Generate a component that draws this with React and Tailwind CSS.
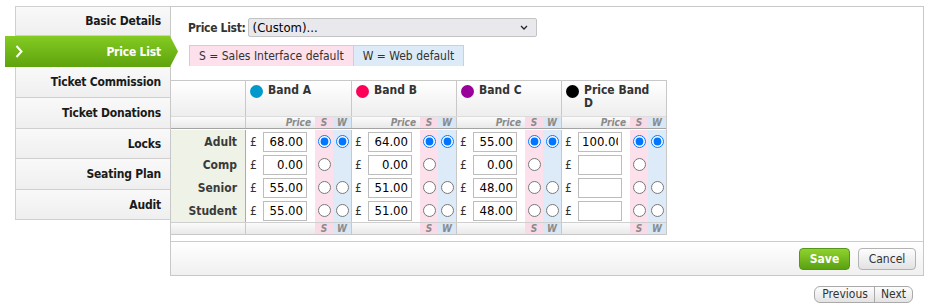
import React from 'react';

const tabs = [
  { label: 'Basic Details', h: 'h-[29px]' },
  { label: 'Price List', h: 'h-[31px]', active: true },
  { label: 'Ticket Commission', h: 'h-[31px]' },
  { label: 'Ticket Donations', h: 'h-[31px]' },
  { label: 'Locks', h: 'h-[30px]' },
  { label: 'Seating Plan', h: 'h-[31px]' },
  { label: 'Audit', h: 'h-[30px]' },
];

const bands = [
  { name: 'Band A', dot: 'bg-[#0099cc]', prices: ['68.00', '0.00', '55.00', '55.00'] },
  { name: 'Band B', dot: 'bg-[#ff0059]', prices: ['64.00', '0.00', '51.00', '51.00'] },
  { name: 'Band C', dot: 'bg-[#990099]', prices: ['55.00', '0.00', '48.00', '48.00'] },
  { name: 'Price Band D', dot: 'bg-black', prices: ['100.00', '', '', ''] },
];

const rows = [
  { label: 'Adult', h: 'h-[24px] pt-[1px]' },
  { label: 'Comp', h: 'h-[23px]' },
  { label: 'Senior', h: 'h-[23px]' },
  { label: 'Student', h: 'h-[23px]' },
];

const rowGrid = 'grid grid-cols-[75px_repeat(4,15px_54px_18px_18px)]';

const Sidebar = () => (
  <div className="w-[155px] border-t border-[#cfcfcf]">
    {tabs.map((t) =>
      t.active ? (
        <div key={t.label} className={`relative z-10 -ml-[10px] w-[165px] ${t.h} flex items-center justify-between pl-[10px] pr-[9px] bg-gradient-to-b from-[#84cb22] to-[#5ea30c] text-white`}>
          <svg width="8" height="13" viewBox="0 0 8 13">
            <polyline points="1.5,1 6.5,6.5 1.5,12" fill="none" stroke="white" strokeWidth="2" />
          </svg>
          <span className="font-bold text-[12px] tracking-[-0.2px]">{t.label}</span>
          <svg className="absolute top-0 right-[-8px]" width="8" height="31" viewBox="0 0 8 31">
            <defs>
              <linearGradient id="tabg" x1="0" y1="0" x2="0" y2="1">
                <stop offset="0" stopColor="#84cb22" />
                <stop offset="1" stopColor="#5ea30c" />
              </linearGradient>
            </defs>
            <polygon points="0,0 8,15.5 0,31" fill="url(#tabg)" />
          </svg>
        </div>
      ) : (
        <div key={t.label} className={`${t.h} flex items-center justify-end pr-[9px] border-l border-b border-[#cfcfcf] bg-gradient-to-b from-[#f9f9f9] to-[#efefef] text-[12px] tracking-[-0.2px] font-bold text-[#1a1a1a]`}>
          {t.label}
        </div>
      )
    )}
  </div>
);

const Radio = ({ name, checked }) => (
  <input type="radio" name={name} defaultChecked={checked} className="m-0 w-[13px] h-[13px]" />
);

const PriceTable = () => (
  <div className="w-[496px] border-t border-r border-b border-[#c8c8c8] text-[#333]">
    <div className="grid grid-cols-[75px_repeat(4,105px)] h-[36px] border-b border-[#dcdcdc] bg-gradient-to-b from-white to-[#eeeeee]">
      <div className="border-r border-[#c8c8c8]" />
      {bands.map((b, i) => (
        <div key={b.name} className={`flex items-start gap-[5px] pl-[4px] pt-[3px] ${i > 0 ? 'border-l border-[#c8c8c8]' : ''}`}>
          <span className={`mt-[1px] w-[13px] h-[13px] rounded-full shrink-0 ${b.dot}`} />
          <span className="max-w-[66px] text-[12px] leading-[13px] font-bold">{b.name}</span>
        </div>
      ))}
    </div>
    <div className={`${rowGrid} h-[12px] border-b border-[#a3a3a3] bg-gradient-to-b from-[#fbfbfb] to-[#e9e9e9] text-[10px] leading-[11px] italic font-bold text-[#8a8a8a]`}>
      <div className="border-r border-[#c8c8c8]" />
      {bands.map((b, i) => (
        <React.Fragment key={b.name}>
          <div className={i > 0 ? 'border-l border-[#c8c8c8]' : ''} />
          <div className="text-right pr-[4px]">Price</div>
          <div className="bg-[#f9dbe7] text-center">S</div>
          <div className="bg-[#d9e7f5] text-center">W</div>
        </React.Fragment>
      ))}
    </div>
    {rows.map((r, ri) => (
      <div key={r.label} className={`${rowGrid} ${r.h}`}>
        <div className="flex items-center justify-end pr-[8px] bg-[#eff2e6] border-r border-[#aab489] text-[12px] font-bold text-[#3a3a3a]">
          {r.label}
        </div>
        {bands.map((b, i) => (
          <React.Fragment key={b.name}>
            <div className={`flex items-center text-[12px] ${i > 0 ? 'border-l border-[#c8c8c8] pl-[3px]' : 'pl-[4px]'}`}>£</div>
            <div className="flex items-center">
              <input
                type="text"
                defaultValue={b.prices[ri]}
                className="ml-[2px] w-[44px] h-[20px] border border-[#bdbdbd] bg-white text-right px-[3px] text-[13px] text-black outline-none"
              />
            </div>
            <div className="flex items-center justify-center bg-[#fce0ec]">
              <Radio name={`s-${i}`} checked={ri === 0} />
            </div>
            <div className="flex items-center justify-center bg-[#ddebf8]">
              {r.label !== 'Comp' && <Radio name={`w-${i}`} checked={ri === 0} />}
            </div>
          </React.Fragment>
        ))}
      </div>
    ))}
    <div className={`${rowGrid} h-[12px] border-t border-[#cfcfcf] bg-gradient-to-b from-[#fbfbfb] to-[#e9e9e9] text-[10px] leading-[11px] italic font-bold text-[#8a8a8a]`}>
      <div className="border-r border-[#c8c8c8]" />
      {bands.map((b, i) => (
        <React.Fragment key={b.name}>
          <div className={i > 0 ? 'border-l border-[#c8c8c8]' : ''} />
          <div />
          <div className="bg-[#f9dbe7] text-center">S</div>
          <div className="bg-[#d9e7f5] text-center">W</div>
        </React.Fragment>
      ))}
    </div>
  </div>
);

export default function App() {
  return (
    <div className="w-[930px] h-[307px] overflow-hidden bg-white font-['DejaVu_Sans_Condensed','DejaVu_Sans',sans-serif] text-[#222]">
      <div className="flex pt-[6px] pl-[15px]">
        <Sidebar />
        <div className="w-[754px] h-[270px] flex flex-col border border-[#c8c8c8]">
          <div className="flex items-center pt-[11px] pl-[17px]">
            <span className="text-[12px] font-bold text-[#333] tracking-[-0.3px]">Price List:</span>
            <div className="ml-[2px] w-[289px] h-[19px] flex items-center justify-between pl-[4px] pr-[8px] bg-[#e9e9ed] border border-[#c4c4c4] rounded-[2px] text-[13px] text-black">
              <span>(Custom)...</span>
              <svg width="8" height="5" viewBox="0 0 8 5">
                <polyline points="1,1 4,4 7,1" fill="none" stroke="#222" strokeWidth="1.3" />
              </svg>
            </div>
          </div>
          <div className="flex ml-[18px] mt-[8px] h-[21px] w-fit border-t border-x border-[#cfcfcf] text-[12px] text-[#333]">
            <div className="flex items-center px-[9px] bg-[#fce0ec] border-r border-[#cfcfcf]">S = Sales Interface default</div>
            <div className="flex items-center px-[9px] bg-[#ddebf8]">W = Web default</div>
          </div>
          <div className="mt-[14px]">
            <PriceTable />
          </div>
          <div className="mt-auto h-[34px] flex items-center justify-end gap-[8px] pr-[7px] border-t border-[#cccccc] bg-gradient-to-b from-white to-[#f0f0f0]">
            <button className="w-[51px] h-[22px] rounded-[4px] border border-[#54951a] bg-gradient-to-b from-[#8fd22e] to-[#5aa111] text-white text-[12px] font-bold">
              Save
            </button>
            <button className="w-[58px] h-[22px] rounded-[4px] border border-[#b3b3b3] bg-gradient-to-b from-[#fdfdfd] to-[#e2e2e2] text-[#333] text-[12px]">
              Cancel
            </button>
          </div>
        </div>
      </div>
      <div className="flex justify-end pr-[17px] mt-[10px]">
        <div className="flex h-[17px] rounded-[6px] border border-[#aaaaaa] bg-gradient-to-b from-[#fdfdfd] to-[#e3e3e3] text-[12px] text-[#333] leading-[15px]">
          <span className="pl-[7px] pr-[6px] border-r border-[#aaaaaa]">Previous</span>
          <span className="px-[6px]">Next</span>
        </div>
      </div>
    </div>
  );
}
